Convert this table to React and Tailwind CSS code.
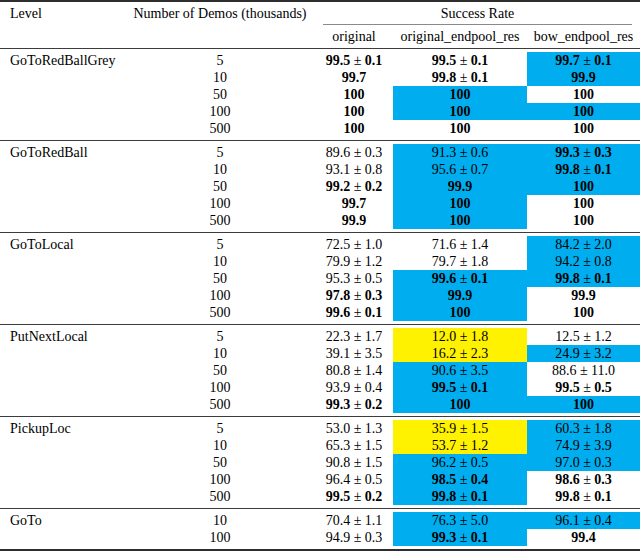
import React from "react";

// each cell: "*" prefix = bold, "|b" = blue highlight, "|y" = yellow highlight
const groups = [
  {
    level: "GoToRedBallGrey",
    rows: [
      ["5", "*99.5 ± 0.1", "*99.5 ± 0.1", "*99.7 ± 0.1|b"],
      ["10", "*99.7", "*99.8 ± 0.1", "*99.9|b"],
      ["50", "*100", "*100|b", "*100"],
      ["100", "*100", "*100|b", "*100|b"],
      ["500", "*100", "*100", "*100"],
    ],
  },
  {
    level: "GoToRedBall",
    rows: [
      ["5", "89.6 ± 0.3", "91.3 ± 0.6|b", "*99.3 ± 0.3|b"],
      ["10", "93.1 ± 0.8", "95.6 ± 0.7|b", "*99.8 ± 0.1|b"],
      ["50", "*99.2 ± 0.2", "*99.9|b", "*100|b"],
      ["100", "*99.7", "*100|b", "*100"],
      ["500", "*99.9", "*100|b", "*100"],
    ],
  },
  {
    level: "GoToLocal",
    rows: [
      ["5", "72.5 ± 1.0", "71.6 ± 1.4", "84.2 ± 2.0|b"],
      ["10", "79.9 ± 1.2", "79.7 ± 1.8", "94.2 ± 0.8|b"],
      ["50", "95.3 ± 0.5", "*99.6 ± 0.1|b", "*99.8 ± 0.1|b"],
      ["100", "*97.8 ± 0.3", "*99.9|b", "*99.9"],
      ["500", "*99.6 ± 0.1", "*100|b", "*100"],
    ],
  },
  {
    level: "PutNextLocal",
    rows: [
      ["5", "22.3 ± 1.7", "12.0 ± 1.8|y", "12.5 ± 1.2"],
      ["10", "39.1 ± 3.5", "16.2 ± 2.3|y", "24.9 ± 3.2|b"],
      ["50", "80.8 ± 1.4", "90.6 ± 3.5|b", "88.6 ± 11.0"],
      ["100", "93.9 ± 0.4", "*99.5 ± 0.1|b", "*99.5 ± 0.5"],
      ["500", "*99.3 ± 0.2", "*100|b", "*100|b"],
    ],
  },
  {
    level: "PickupLoc",
    rows: [
      ["5", "53.0 ± 1.3", "35.9 ± 1.5|y", "60.3 ± 1.8|b"],
      ["10", "65.3 ± 1.5", "53.7 ± 1.2|y", "74.9 ± 3.9|b"],
      ["50", "90.8 ± 1.5", "96.2 ± 0.5|b", "97.0 ± 0.3|b"],
      ["100", "96.4 ± 0.5", "*98.5 ± 0.4|b", "*98.6 ± 0.3"],
      ["500", "*99.5 ± 0.2", "*99.8 ± 0.1|b", "*99.8 ± 0.1"],
    ],
  },
  {
    level: "GoTo",
    rows: [
      ["10", "70.4 ± 1.1", "76.3 ± 5.0|b", "96.1 ± 0.4|b"],
      ["100", "94.9 ± 0.3", "*99.3 ± 0.1|b", "*99.4"],
    ],
  },
];

const fills = { b: "bg-[#00aeef]", y: "bg-[#fff200]" };

const cols = "grid grid-cols-[125px_190px_78px_134px_113px]";

const Value = ({ raw }) => {
  const [body, fill] = raw.split("|");
  const bold = body.startsWith("*");
  const text = bold ? body.slice(1) : body;
  const [a, b] = text.split(" ± ");
  return (
    <div className={`h-[17px] flex items-center justify-center ${fill ? fills[fill] : ""} ${bold ? "font-bold" : ""}`}>
      {b ? (
        <span>
          {a}
          <span className="font-normal"> ± </span>
          {b}
        </span>
      ) : (
        <span>{a}</span>
      )}
    </div>
  );
};

const Rule = () => <div className="h-px bg-[#3c3c3c]" />;

export default function App() {
  return (
    <div className="w-[640px] h-[551px] bg-white text-black text-[14px] leading-[17px] overflow-hidden" style={{ fontFamily: '"Liberation Serif", "Times New Roman", serif' }}>
      <div className="h-[2px] bg-[#2e2e2e]" />

      {/* header */}
      <div className={`${cols} h-[22px] items-center`}>
        <div className="pl-[10px]">Level</div>
        <div className="text-center">Number of Demos (thousands)</div>
        <div className="col-span-3 text-center">Success Rate</div>
      </div>
      <div className={cols}>
        <div className="col-start-3 col-span-3 px-[8px]">
          <div className="h-px bg-[#8a8a8a]" />
        </div>
      </div>
      <div className={`${cols} h-[23px] items-center`}>
        <div />
        <div />
        <div className="text-center">original</div>
        <div className="text-center">original_endpool_res</div>
        <div className="text-center">bow_endpool_res</div>
      </div>
      <Rule />

      {groups.map((g, gi) => (
        <div key={g.level}>
          <div className="py-[3px]">
            {g.rows.map((r, ri) => (
              <div key={ri} className={`${cols} h-[17px]`}>
                <div className="pl-[10px]">{ri === 0 ? g.level : ""}</div>
                <div className="text-center">{r[0]}</div>
                <Value raw={r[1]} />
                <Value raw={r[2]} />
                <Value raw={r[3]} />
              </div>
            ))}
          </div>
          {gi < groups.length - 1 ? <Rule /> : <div className="h-[2px] bg-[#2e2e2e]" />}
        </div>
      ))}
    </div>
  );
}
